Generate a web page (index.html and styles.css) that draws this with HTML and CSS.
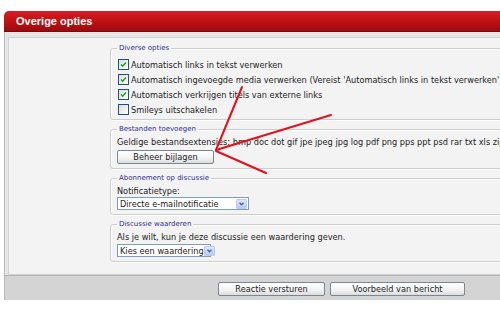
FILE: index.html
```html
<!DOCTYPE html>
<html lang="nl">

<head>
    <meta charset="UTF-8">
    <meta name="viewport" content="width=device-width, initial-scale=1.0">
    <title>Overige opties</title>
    <link rel="stylesheet" href="styles.css">
</head>

<body>
    <div class="page">
        <div class="window">
            <div class="titlebar">Overige opties</div>

            <div class="panel">
                <div class="content">
                    <fieldset class="group group-options">
                        <legend>Diverse opties</legend>
                        <label class="check">
                            <span class="box checked"><svg viewBox="0 0 11 11"><polyline points="2.5,5.5 4.5,7.5 8.5,3" /></svg></span>
                            Automatisch links in tekst verwerken
                        </label>
                        <label class="check">
                            <span class="box checked"><svg viewBox="0 0 11 11"><polyline points="2.5,5.5 4.5,7.5 8.5,3" /></svg></span>
                            Automatisch ingevoegde media verwerken (Vereist 'Automatisch links in tekst verwerken' ingeschakeld)
                        </label>
                        <label class="check">
                            <span class="box checked"><svg viewBox="0 0 11 11"><polyline points="2.5,5.5 4.5,7.5 8.5,3" /></svg></span>
                            Automatisch verkrijgen titels van externe links
                        </label>
                        <label class="check">
                            <span class="box"></span>
                            Smileys uitschakelen
                        </label>
                    </fieldset>

                    <fieldset class="group">
                        <legend>Bestanden toevoegen</legend>
                        <div class="line">Geldige bestandsextensies: bmp doc dot gif jpe jpeg jpg log pdf png pps ppt psd rar txt xls zip</div>
                        <button class="btn btn-attach">Beheer bijlagen</button>
                    </fieldset>

                    <fieldset class="group">
                        <legend>Abonnement op discussie</legend>
                        <div class="line">Notificatietype:</div>
                        <div class="select select-notify">
                            <span class="select-value">Directe e-mailnotificatie</span>
                            <span class="select-arrow"><svg viewBox="0 0 11 10"><polyline points="3,3.5 5.5,6 8,3.5" /></svg></span>
                        </div>
                    </fieldset>

                    <fieldset class="group group-rating">
                        <legend>Discussie waarderen</legend>
                        <div class="line">Als je wilt, kun je deze discussie een waardering geven.</div>
                        <div class="select select-rating">
                            <span class="select-value">Kies een waardering</span>
                            <span class="select-arrow"><svg viewBox="0 0 11 10"><polyline points="3,3.5 5.5,6 8,3.5" /></svg></span>
                        </div>
                    </fieldset>
                </div>

                <div class="footer">
                    <button class="btn btn-send">Reactie versturen</button>
                    <button class="btn btn-preview">Voorbeeld van bericht</button>
                </div>
            </div>
        </div>

        <!-- rode pijlen over de pagina -->
        <svg class="arrows" viewBox="0 0 500 309">
            <line x1="242" y1="87" x2="216" y2="150" />
            <line x1="331" y1="115" x2="216" y2="150" />
            <line x1="266" y1="173" x2="216" y2="151" />
        </svg>
    </div>
</body>

</html>
```

FILE: styles.css
```css
* {
    margin: 0;
    padding: 0;
    box-sizing: border-box;
}

body {
    font-family: 'DejaVu Sans', Verdana, sans-serif;
    font-size: 8.2px;
    color: #222;
    background: #fff;
    overflow: hidden;
}

.page {
    position: relative;
    width: 500px;
    height: 309px;
    padding: 11px 0 0 4px;
}

.window {
    width: 720px;
}

.titlebar {
    height: 21px;
    line-height: 21px;
    padding-left: 12px;
    border-radius: 5px 0 0 0;
    background: linear-gradient(#d61e22 0%, #bd1014 55%, #9c0a0c 100%);
    border-bottom: 1px solid #7a0a0a;
    color: #fff;
    font-family: 'Liberation Sans', Arial, sans-serif;
    font-size: 11px;
    font-weight: bold;
}

.panel {
    background: #e6e6e6;
    border-left: 1px solid #b8b8b8;
    padding: 5px 0 0 3px;
}

.content {
    background: #f3f3f3;
    border: 1px solid #d2d2d2;
    border-right: none;
    padding: 6px 0 12px 101px;
}

.group {
    width: 600px;
    border: 1px solid #cdcdcd;
    border-radius: 3px;
    padding: 3px 6px 4px;
    margin-bottom: 5px;
    box-shadow: inset 1px 1px 0 #fff, 1px 1px 0 #fff;
}

.group:last-child {
    margin-bottom: 0;
}

.group-options {
    padding-top: 4px;
    padding-bottom: 2px;
}

.group legend {
    padding: 0 2px;
    font-size: 7px;
    line-height: 9px;
    color: #2c2c8a;
}

.check {
    display: flex;
    align-items: center;
    gap: 2px;
    height: 15px;
    white-space: nowrap;
}

.box {
    width: 11px;
    height: 11px;
    margin-left: 1px;
    border: 1px solid #1c5180;
    background: linear-gradient(135deg, #dcdcd7 0%, #fff 100%);
    display: flex;
}

.box svg {
    width: 9px;
    height: 9px;
    fill: none;
    stroke: #21a121;
    stroke-width: 1.8;
}

.line {
    line-height: 11px;
    white-space: nowrap;
}

.btn {
    height: 14px;
    border: 1px solid #7a8693;
    border-radius: 2px;
    background: linear-gradient(#fff 0%, #f2f2f2 60%, #dcdcdc 100%);
    font-family: 'DejaVu Sans', Verdana, sans-serif;
    font-size: 8.2px;
    color: #222;
    line-height: 12px;
}

.btn-attach {
    width: 97px;
    margin-top: 2px;
}

.select {
    display: flex;
    align-items: center;
    height: 13px;
    border: 1px solid #7f9db9;
    background: #fff;
}

.group-rating .select {
    margin-top: 1px;
}

.select-notify {
    width: 132px;
}

.select-rating {
    width: 94px;
}

.select-value {
    flex: 1;
    padding-left: 2px;
    white-space: nowrap;
}

.select-arrow {
    width: 11px;
    height: 10px;
    margin-right: 1px;
    border: 1px solid #b9cbf3;
    border-radius: 1px;
    background: linear-gradient(#dde7fd, #b7c9f4);
    display: flex;
}

.select-arrow svg {
    width: 9px;
    height: 8px;
    fill: none;
    stroke: #4d6185;
    stroke-width: 1.6;
}

.footer {
    height: 25px;
    margin-left: -3px;
    padding: 6px 0 0 213px;
    background: #d4d4d4;
    border-top: 1px solid #b4b4b4;
    display: flex;
    align-items: flex-start;
    gap: 5px;
}

.btn-send {
    width: 107px;
}

.btn-preview {
    width: 135px;
}

.arrows {
    position: absolute;
    top: 0;
    left: 0;
    width: 500px;
    height: 309px;
    pointer-events: none;
}

.arrows line {
    stroke: #e0121c;
    stroke-width: 2;
    stroke-linecap: round;
}
```
